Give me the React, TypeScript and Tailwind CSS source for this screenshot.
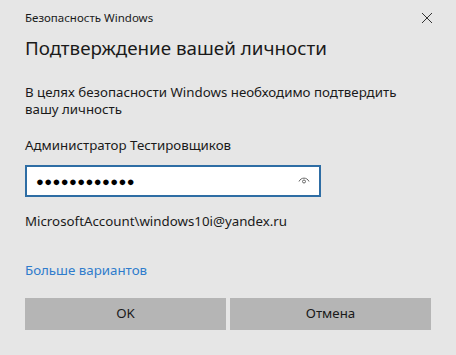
import React from "react";

export default function App() {
  return (
    <div
      className="w-[456px] h-[355px] bg-[#e6e6e6] text-[#000] overflow-hidden flex flex-col px-[25px]"
      style={{ fontFamily: '"Noto Sans", "Open Sans", sans-serif' }}
    >
      <div className="flex items-center justify-between h-[34px] pt-[1px]">
        <span className="text-[11.5px] text-[#1a1a1a]">Безопасность Windows</span>
        <svg width="12" height="12" viewBox="0 0 12 12" className="mr-[-2px]">
          <path d="M1 1 L11 11 M11 1 L1 11" stroke="#333" strokeWidth="1" fill="none" />
        </svg>
      </div>
      <div className="text-[18.8px] leading-[28px] text-[#1a1a1a]">Подтверждение вашей личности</div>
      <div className="text-[13.3px] leading-[16.5px] mt-[22px] text-[#1a1a1a]">
        В целях безопасности Windows необходимо подтвердить вашу личность
      </div>
      <div className="text-[13.3px] leading-[20px] mt-[18px] text-[#1a1a1a]">Администратор Тестировщиков</div>
      <div className="mt-[10px] w-[296px] h-[32px] bg-white border-2 border-[#2e6da4] flex items-center justify-between pl-[9px] pr-[9px]">
        <span className="text-[13px] tracking-[0.4px] text-black leading-none">●●●●●●●●●●●●</span>
        <svg width="12" height="10" viewBox="0 0 12 10" className="mt-[-3px]">
          <path d="M1 6.5 C3 2, 9 2, 11 6.5" stroke="#666" strokeWidth="1" fill="none" />
          <circle cx="6" cy="6.5" r="1.5" stroke="#666" strokeWidth="1" fill="none" />
        </svg>
      </div>
      <div className="text-[13.3px] leading-[20px] mt-[14px] text-[#1a1a1a]">MicrosoftAccount\windows10i@yandex.ru</div>
      <div className="text-[13.3px] leading-[20px] mt-[29px] text-[#2f7ccc]">Больше вариантов</div>
      <div className="flex gap-[4px] mt-[18px]">
        <div className="w-[201px] h-[32px] bg-[#b5b5b5] flex items-center justify-center text-[13.3px] text-[#1a1a1a]">OK</div>
        <div className="w-[201px] h-[32px] bg-[#b5b5b5] flex items-center justify-center text-[13.3px] text-[#1a1a1a]">Отмена</div>
      </div>
    </div>
  );
}
